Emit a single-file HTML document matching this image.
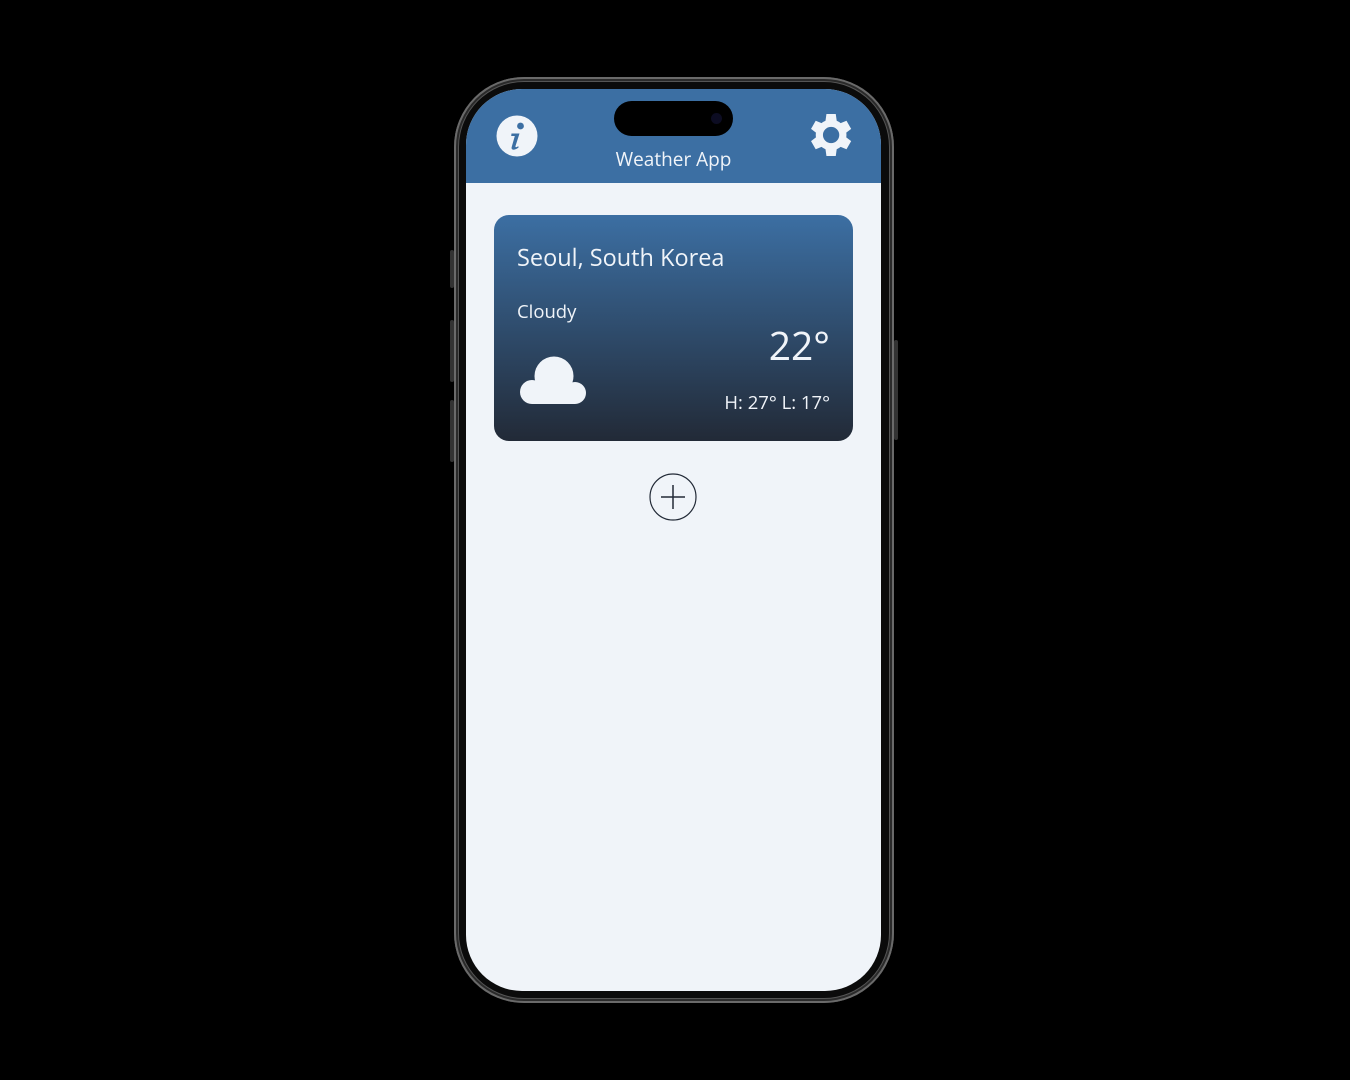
<!DOCTYPE html>
<html><head><meta charset="utf-8"><style>
body{margin:0;width:1350px;height:1080px;background:#000;position:relative;overflow:hidden;font-family:"Open Sans","Liberation Sans",sans-serif}
.frame{position:absolute;left:454px;top:77px;width:440px;height:926px;border-radius:70px;background:#0b0b0b;box-shadow:inset 0 0 0 2px #6a6a6a,inset 0 0 0 4px #2a2a2a,inset 0 0 0 5px #555}
.btn{position:absolute;background:#333;border-radius:2px}
.screen{position:absolute;left:466px;top:89px;width:415px;height:902px;border-radius:56px;background:#f0f4f9;overflow:hidden}
.hdr{position:absolute;left:0;top:0;width:415px;height:94px;background:#3c6fa3}
.island{position:absolute;left:148px;top:12px;width:119px;height:35px;border-radius:18px;background:#000}
.title{position:absolute;left:0;width:415px;top:57px;text-align:center;color:#f0f4f9;font-size:19px}
.card{position:absolute;left:28px;top:126px;width:359px;height:226px;border-radius:15px;background:linear-gradient(#3c6fa3,#222a37);color:#f0f4f9}
.t{position:absolute;white-space:nowrap}
</style></head><body>
<div class="btn" style="left:450px;top:250px;width:4px;height:38px"></div>
<div class="btn" style="left:450px;top:320px;width:4px;height:62px"></div>
<div class="btn" style="left:450px;top:400px;width:4px;height:62px"></div>
<div class="btn" style="left:894px;top:340px;width:4px;height:100px"></div>
<div class="frame"></div>
<div class="screen">
 <div class="hdr">
  <div class="island"><div style="position:absolute;right:11px;top:12px;width:11px;height:11px;border-radius:50%;background:#0c0c22"></div></div>
  <svg style="position:absolute;left:30px;top:26px" width="42" height="42" viewBox="0 0 42 42"><circle cx="21" cy="21" r="20.5" fill="#f0f4f9"/><circle cx="24.5" cy="11" r="3.4" fill="#3c6fa3"/><path d="M15.5 18.5h8l-4 12.5c-.4 1.4.8 1.6 2.6.2l.7.9c-2.8 3-7.8 3.8-7.2.3l3.2-11.4h-3.6z" fill="#3c6fa3"/></svg>
  <svg style="position:absolute;left:335px;top:18px" width="56" height="56" viewBox="0 0 24 24"><path fill="#f0f4f9" d="M19.4 13a7.5 7.5 0 0 0 0-2l2.1-1.6-2-3.5-2.5 1a7.6 7.6 0 0 0-1.7-1L14.9 3h-4l-.4 2.9a7.6 7.6 0 0 0-1.7 1l-2.5-1-2 3.5L6.4 11a7.5 7.5 0 0 0 0 2l-2.1 1.6 2 3.5 2.5-1a7.6 7.6 0 0 0 1.7 1l.4 2.9h4l.4-2.9a7.6 7.6 0 0 0 1.7-1l2.5 1 2-3.5zM12.9 15.5a3.5 3.5 0 1 1 0-7 3.5 3.5 0 0 1 0 7z"/></svg>
  <div class="title">Weather App</div>
 </div>
 <div class="card">
  <div class="t" style="left:23px;top:26px;font-size:23.5px">Seoul, South Korea</div>
  <div class="t" style="left:23px;top:84px;font-size:18.5px">Cloudy</div>
  <div class="t" style="right:23px;top:104px;font-size:39px">22°</div>
  <div class="t" style="right:23px;top:175px;font-size:18.5px">H: 27° L: 17°</div>
  <svg style="position:absolute;left:26px;top:141px" width="66" height="48" viewBox="0 0 66 48" fill="#f0f4f9"><circle cx="34" cy="20" r="19.5"/><circle cx="12" cy="36" r="12"/><circle cx="55" cy="37" r="11"/><rect x="12" y="28" width="43" height="20"/></svg>
 </div>
 <svg style="position:absolute;left:183px;top:384px" width="48" height="48" viewBox="0 0 48 48"><circle cx="24" cy="24" r="23" fill="none" stroke="#222a37" stroke-width="1.2"/><path d="M12 24h24M24 12v24" stroke="#222a37" stroke-width="1.5"/></svg>
</div>
</body></html>
